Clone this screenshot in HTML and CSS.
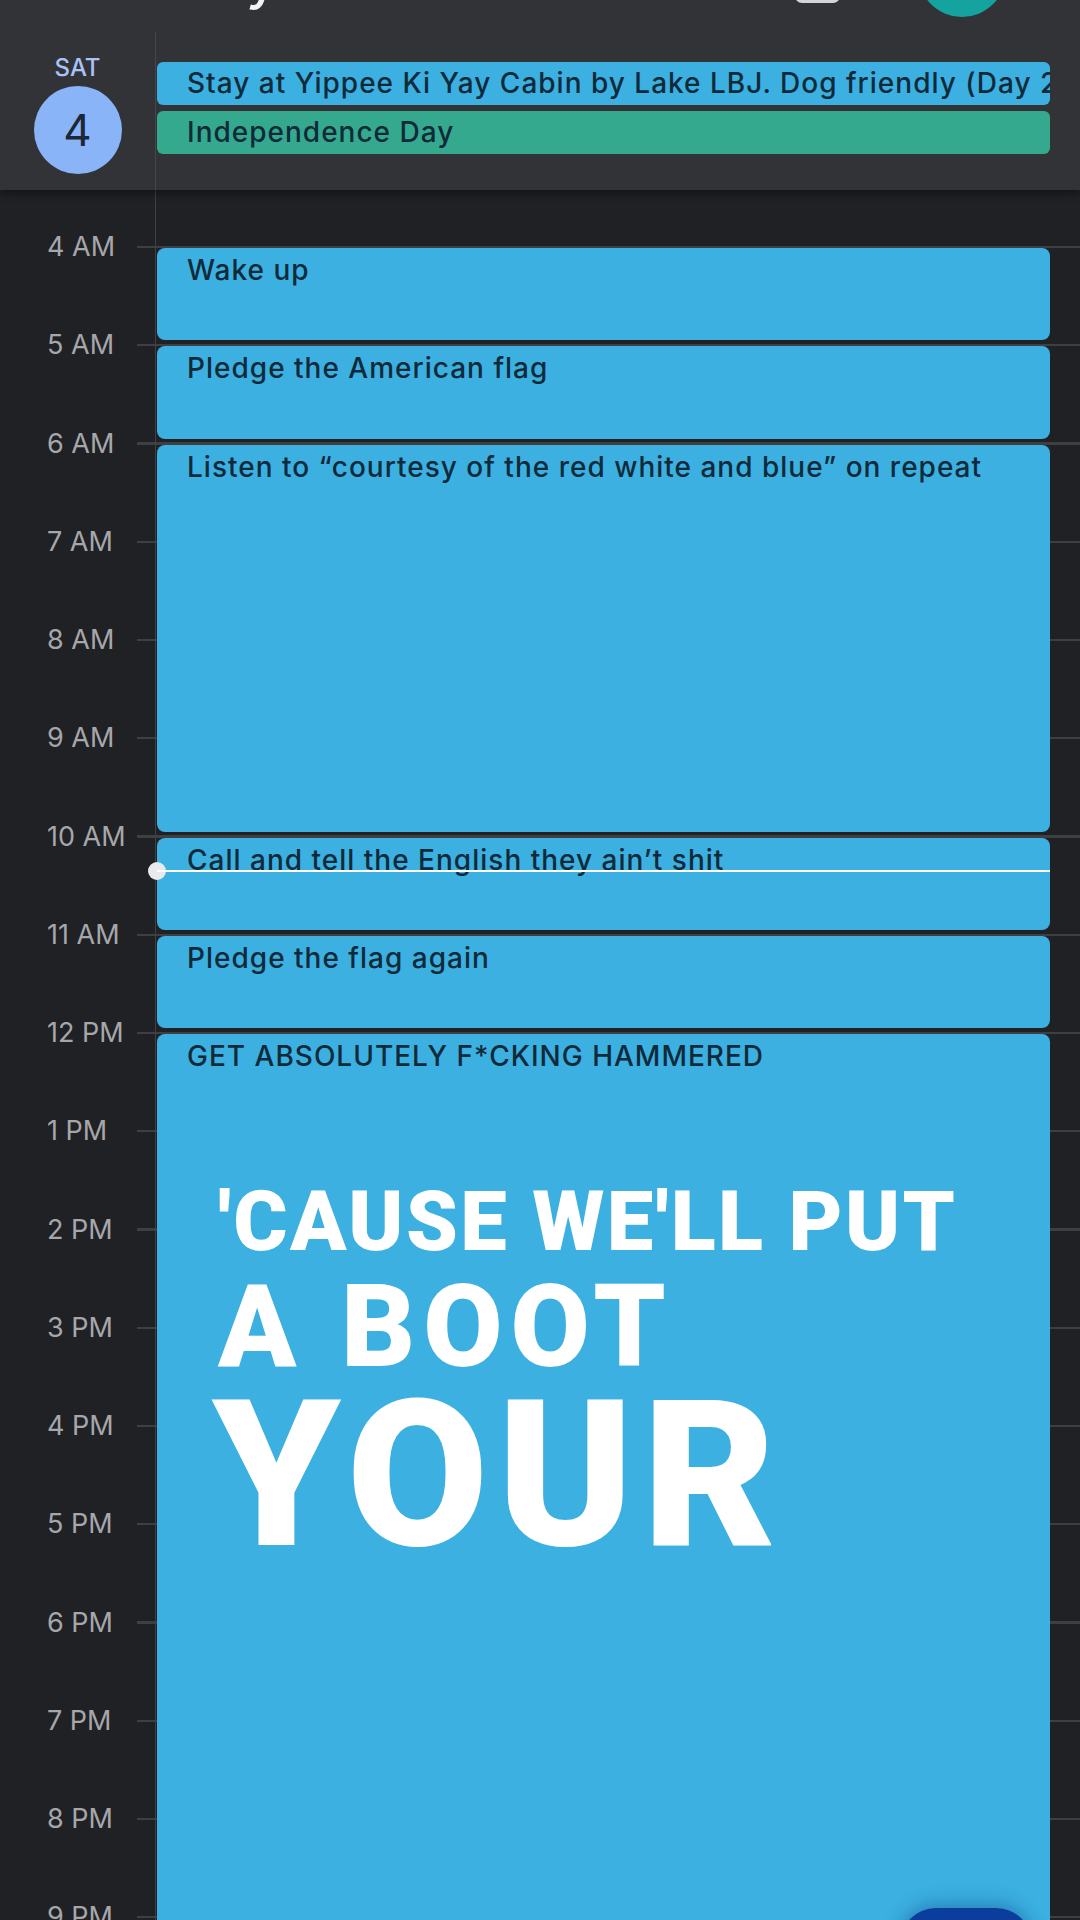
FILE: index.html
```html
<!DOCTYPE html>
<html lang="en">
<head>
  <meta charset="UTF-8">
  <meta name="viewport" content="width=device-width, initial-scale=1.0">
  <title>Calendar - Day</title>
  <link rel="stylesheet" href="styles.css">
</head>
<body>
  <div class="screen">
    <header class="top">
      <div class="appbar">
        <span class="month">July</span>
        <span class="today-icon"></span>
        <span class="avatar"></span>
      </div>
      <div class="allday">
        <div class="day">
          <span class="dow">SAT</span>
          <span class="date">4</span>
        </div>
        <div class="chips">
          <div class="chip">Stay at Yippee Ki Yay Cabin by Lake LBJ. Dog friendly (Day 2/3)</div>
          <div class="chip holiday">Independence Day</div>
        </div>
      </div>
    </header>

    <main class="timeline">
      <div class="hr">4 AM</div>
      <div class="hr">5 AM</div>
      <div class="hr">6 AM</div>
      <div class="hr">7 AM</div>
      <div class="hr">8 AM</div>
      <div class="hr">9 AM</div>
      <div class="hr">10 AM</div>
      <div class="hr">11 AM</div>
      <div class="hr">12 PM</div>
      <div class="hr">1 PM</div>
      <div class="hr">2 PM</div>
      <div class="hr">3 PM</div>
      <div class="hr">4 PM</div>
      <div class="hr">5 PM</div>
      <div class="hr">6 PM</div>
      <div class="hr">7 PM</div>
      <div class="hr">8 PM</div>
      <div class="hr">9 PM</div>

      <div class="event" style="grid-row: 1 / span 1">Wake up</div>
      <div class="event" style="grid-row: 2 / span 1">Pledge the American flag</div>
      <div class="event" style="grid-row: 3 / span 4">Listen to “courtesy of the red white and blue” on repeat</div>
      <div class="event" style="grid-row: 7 / span 1">Call and tell the English they ain’t shit</div>
      <div class="event" style="grid-row: 8 / span 1">Pledge the flag again</div>
      <div class="event" style="grid-row: 9 / span 10">
        GET ABSOLUTELY F*CKING HAMMERED
        <div class="caption">
          <span class="cap-1">'CAUSE WE'LL PUT</span>
          <span class="cap-2">A BOOT</span>
          <span class="cap-3">YOUR</span>
        </div>
      </div>

      <!-- current time marker, 10:21 -->
      <div class="now"></div>
    </main>

    <button class="fab"></button>
  </div>
</body>
</html>
```

FILE: styles.css
```css
*{
  box-sizing: border-box;
}
body{
  margin: 0;
  background: #202124;
  font-family: Inter, "Noto Sans", sans-serif;
}
.screen{
  position: relative;
  width: 1080px;
  height: 1920px;
  overflow: hidden;
  background: #202124;
}

/* top: app bar + all day row */
.top{
  height: 190px;
  background: #323337;
  box-shadow: 0 3px 8px rgba(0,0,0,.45);
  position: relative;
  z-index: 2;
}
.appbar{
  height: 32px;
  display: flex;
  align-items: flex-start;
}
.month{
  margin: -56px 0 0 158px;
  font-size: 62px;
  line-height: 62px;
  font-weight: 400;
  color: #f1f3f4;
}
.today-icon{
  width: 45px;
  height: 45px;
  margin: -42px 0 0 auto;
  border: 3px solid #d4d5d7;
  border-radius: 7px;
}
.avatar{
  width: 88px;
  height: 88px;
  margin: -71px 74px 0 78px;
  border-radius: 50%;
  background: #14a39f;
}

.allday{
  display: flex;
  height: 158px;
}
.day{
  flex: 0 0 156px;
  border-right: 1px solid #46474b;
  display: flex;
  flex-direction: column;
  align-items: center;
  padding-top: 24px;
}
.dow{
  font-size: 24px;
  line-height: 24px;
  font-weight: 500;
  color: #a9c2f7;
}
.date{
  width: 88px;
  height: 88px;
  margin-top: 6px;
  border-radius: 50%;
  background: #8ab4f8;
  color: #1d2736;
  font-size: 44px;
  line-height: 88px;
  text-align: center;
}
.chips{
  flex: 1;
  min-width: 0;
  padding: 30px 30px 0 1px;
  display: flex;
  flex-direction: column;
  gap: 6px;
}
.chip{
  height: 43px;
  border-radius: 6px;
  background: #3bb0e1;
  color: #102a3a;
  font-size: 28px;
  font-weight: 500;
  letter-spacing: 1px;
  line-height: 43px;
  padding-left: 30px;
  white-space: nowrap;
  overflow: hidden;
}
.chip.holiday{
  background: #34a98d;
}

/* hour grid */
.timeline{
  display: grid;
  grid-template-columns: 156px 1fr 30px;
  grid-template-rows: repeat(18, 98.25px);
  padding-top: 57px;
  position: relative;
  background:
    linear-gradient(#404145, #404145) 155px 0 / 1px 100% no-repeat,
    repeating-linear-gradient(to bottom, #3e3f43 0 2px, transparent 2px 98.25px) 137px 56px / calc(100% - 137px) 100% no-repeat,
    #202124;
}
.hr{
  grid-column: 1;
  margin-top: -16px;
  padding-left: 47px;
  height: 32px;
  font-size: 27px;
  line-height: 32px;
  color: #a6a7ab;
}
.event{
  grid-column: 2;
  margin: 1px 0 5px 1px;
  border-radius: 8px;
  background: #3bb0e1;
  color: #102a3a;
  font-size: 28px;
  font-weight: 500;
  letter-spacing: 1px;
  line-height: 32px;
  padding: 6px 30px;
  overflow: hidden;
  white-space: nowrap;
}

/* big overlay lettering */
.caption{
  display: flex;
  flex-direction: column;
  align-items: flex-start;
  margin: 108px 0 0 31px;
  font-family: Roboto, "Liberation Sans", sans-serif;
  font-weight: 900;
  color: #ffffff;
  white-space: nowrap;
}
.cap-1{
  font-size: 83px;
  line-height: 83px;
  letter-spacing: 2.4px;
}
.cap-2{
  font-size: 115px;
  line-height: 115px;
  letter-spacing: 8px;
  margin-top: 6px;
}
.cap-3{
  font-size: 205px;
  line-height: 205px;
  letter-spacing: 9px;
  margin: -11px 0 0 -6px;
}

.now{
  position: absolute;
  top: 672px;
  left: 148px;
  right: 30px;
  height: 18px;
  display: flex;
  align-items: center;
}
.now::before{
  content: "";
  width: 18px;
  height: 18px;
  border-radius: 50%;
  background: #e8eaed;
}
.now::after{
  content: "";
  flex: 1;
  height: 2px;
  margin-left: -9px;
  background: #ffffff;
}

.fab{
  position: absolute;
  top: 1908px;
  left: 900px;
  width: 132px;
  height: 120px;
  border: 0;
  border-radius: 36px;
  background: #0b3e9c;
  box-shadow: 0 -4px 18px rgba(5,40,110,.35);
}
```
